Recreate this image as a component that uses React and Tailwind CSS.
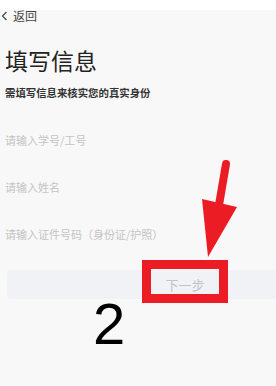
export default function App() {
  return (
    <div
      className="relative w-[276px] h-[386px] overflow-hidden bg-[#f8f8f8] font-['Noto_Sans_CJK_SC','Noto_Sans',sans-serif]"
    >
      <div className="h-[10px] bg-white" />
      <div className="flex items-center h-[12px] pl-[1px]">
        <svg width="7" height="10" viewBox="0 0 7 10" className="mr-[5px]">
          <path d="M5.5 1 L1.5 5 L5.5 9" fill="none" stroke="#444" strokeWidth="1.2" />
        </svg>
        <span className="text-[12px] leading-[12px] text-[#444]">返回</span>
      </div>
      <div className="pl-[5px] pt-[27px] text-[23px] leading-[23px] text-[#222]">
        填写信息
      </div>
      <div className="pl-[5px] pt-[16px] text-[10.4px] leading-[10px] font-semibold text-[#333]">
        需填写信息来核实您的真实身份
      </div>
      <div className="flex flex-col pl-[5px] pt-[37px] gap-[36px] text-[11px] leading-[11px] text-[#c4c4c4]">
        <div>请输入学号/工号</div>
        <div>请输入姓名</div>
        <div>请输入证件号码（身份证/护照）</div>
      </div>
      <div className="ml-[7px] mt-[30px] w-[356px] h-[29px] rounded-[4px] bg-[#f1f2f6] flex items-center justify-center text-[13px] text-[#c0c3ca]">
        下一步
      </div>

      <div className="absolute left-[142px] top-[260px] w-[86px] h-[43px] border-[9px] border-[#ec1c24]" />
      <svg className="absolute left-0 top-0" width="276" height="386" viewBox="0 0 276 386">
        <line x1="226" y1="164" x2="219" y2="205" stroke="#ec1c24" strokeWidth="8" strokeLinecap="round" />
        <polygon points="202,199 237,207 208,257" fill="#ec1c24" />
      </svg>
      <div className="absolute left-[93px] top-[289px] text-[58px] leading-[70px] text-black font-['Liberation_Sans',sans-serif]">
        2
      </div>
    </div>
  );
}
